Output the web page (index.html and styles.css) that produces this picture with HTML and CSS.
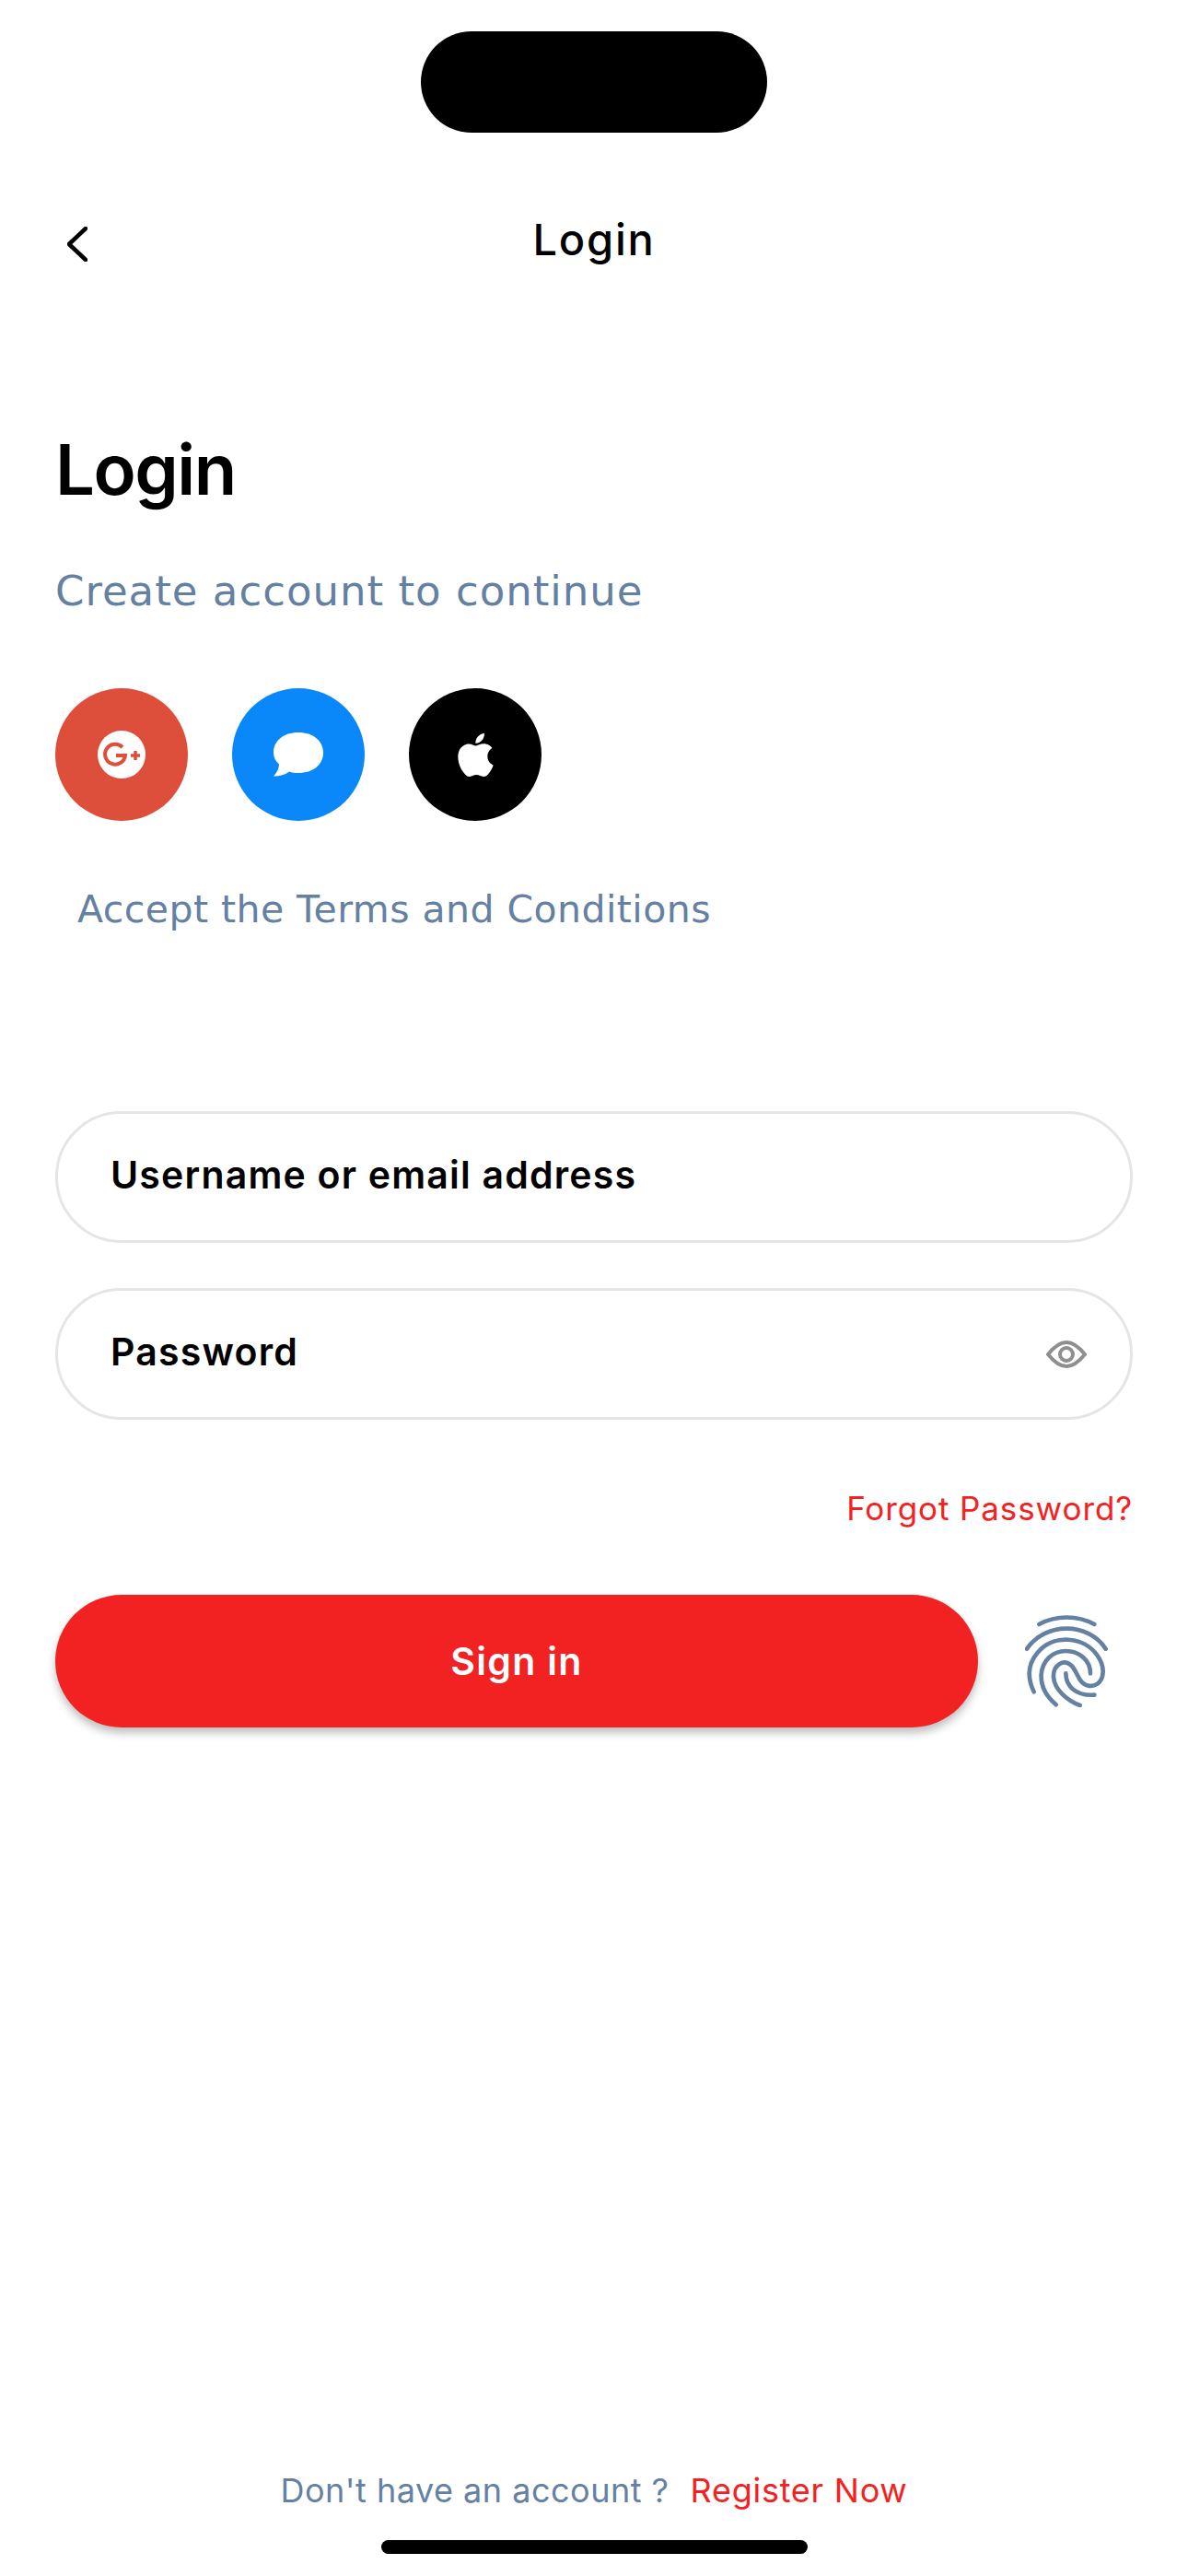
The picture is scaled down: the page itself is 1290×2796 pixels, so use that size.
FILE: index.html
```html
<!DOCTYPE html>
<html>

<head>
	<title>Login</title>
	<link rel="stylesheet" href="styles.css">
</head>

<body>
	<div class="notch"></div>

	<div class="header">
		<svg class="back-icon" viewBox="0 0 22 38" width="22" height="38">
			<path d="M20 2 L2 19 L20 36" fill="none" stroke="#000" stroke-width="4.500" stroke-linecap="round" stroke-linejoin="round" />
		</svg>
		<div class="header-title">Login</div>
	</div>

	<h1 class="title">Login</h1>
	<p class="subtitle">Create account to continue</p>

	<div class="social-row">
		<div class="social-btn google">
			<svg viewBox="0 0 52 52" width="52" height="52">
				<circle cx="26" cy="26" r="26" fill="#fff" />
				<path d="M27 18 A11 11 0 1 0 30 27 H20" fill="none" stroke="#de4f3b" stroke-width="4" />
				<path d="M41 22 V32 M36 27 H46" fill="none" stroke="#de4f3b" stroke-width="3.500" />
			</svg>
		</div>
		<div class="social-btn message">
			<svg viewBox="0 0 56 50" width="56" height="50">
				<path d="M28 1 C44 1 55 10 55 23 C55 36 44 45 28 45 C24 45 21 44.500 18 43.500 C14 47 8 48.500 1 48.500 C5 44 7 40 7 35.500 C3 32 1 28 1 23 C1 10 12 1 28 1 Z" fill="#fff" />
			</svg>
		</div>
		<div class="social-btn apple">
			<svg viewBox="0 0 24 24" width="47" height="47">
				<path d="M12.152 6.896c-.948 0-2.415-1.078-3.96-1.04-2.04.027-3.91 1.183-4.961 3.014-2.117 3.675-.546 9.103 1.519 12.09 1.013 1.454 2.208 3.09 3.792 3.039 1.52-.065 2.09-.987 3.935-.987 1.831 0 2.35.987 3.96.948 1.637-.026 2.676-1.48 3.676-2.948 1.156-1.688 1.636-3.325 1.662-3.415-.039-.013-3.182-1.221-3.22-4.857-.026-3.04 2.48-4.494 2.597-4.559-1.429-2.09-3.623-2.324-4.39-2.376-2-.156-3.675 1.09-4.61 1.09zM15.53 3.83c.843-1.012 1.4-2.427 1.245-3.83-1.207.052-2.662.805-3.532 1.818-.78.896-1.454 2.338-1.273 3.714 1.338.104 2.715-.688 3.559-1.701" fill="#fff" />
			</svg>
		</div>
	</div>

	<p class="terms">Accept the Terms and Conditions</p>

	<div class="field field-first">
		<span>Username or email address</span>
	</div>
	<div class="field field-second">
		<span>Password</span>
		<svg class="eye-icon" viewBox="0 0 44 30" width="44" height="30">
			<path d="M2 15 C10 5 16 2 22 2 C28 2 34 5 42 15 C34 25 28 28 22 28 C16 28 10 25 2 15 Z" fill="none" stroke="#8f8f8f" stroke-width="4" stroke-linejoin="round" />
			<circle cx="22" cy="15" r="7" fill="none" stroke="#8f8f8f" stroke-width="4" />
		</svg>
	</div>

	<a class="forgot">Forgot Password?</a>

	<div class="signin-row">
		<button class="signin-btn" type="button">Sign in</button>
		<svg class="finger-icon" viewBox="100 68 268 300" width="90" height="100">
			<g fill="none" stroke="#6480a3" stroke-width="14" stroke-linecap="round" stroke-linejoin="round">
				<path d="M145 98 C200 68 270 68 325 98" />
				<path d="M105 178 C165 90 305 90 362 178" />
				<path d="M128 318 C105 270 110 225 140 190 C190 130 290 135 335 200 C360 235 358 275 335 292 C315 305 290 298 278 278 C268 262 262 245 250 232 C225 210 190 230 192 270 C195 310 235 345 278 362" />
				<path d="M200 360 C165 330 150 300 152 262 C155 215 190 185 232 185 C275 185 312 215 312 258" />
				<path d="M232 258 C232 300 265 332 325 328" />
			</g>
		</svg>
	</div>

	<div class="footer">
		<span class="footer-text">Don't have an account ?</span>
		<a class="footer-link">Register Now</a>
	</div>
	<div class="home-bar"></div>
</body>

</html>
```
FILE: styles.css
```css
body {
	background-color: #fff;
	color: #000;
	font-family: Inter, "Liberation Sans", sans-serif;
	margin: 0;
	padding: 0 60px 24px;
	width: 1290px;
	height: 2796px;
	box-sizing: border-box;
	display: flex;
	flex-direction: column;
	overflow: hidden;
}

.notch {
	width: 376px;
	height: 110px;
	margin: 34px auto 0;
	background-color: #000;
	border-radius: 55px;
	flex-shrink: 0;
}

.header {
	display: grid;
	grid-template-columns: 1fr auto 1fr;
	align-items: center;
	height: 60px;
	margin-top: 86px;
}

.back-icon {
	display: block;
	margin: 3px 0 0 13px;
}

.header-title {
	grid-column: 2;
	font-size: 47px;
	line-height: 60px;
	font-weight: 500;
	letter-spacing: 1.8px;
	padding-bottom: 7px;
}

.title {
	margin: 174px 0 0;
	font-size: 76px;
	line-height: 90px;
	font-weight: 600;
	letter-spacing: -1.5px;
}

.subtitle {
	margin: 58px 0 0;
	font-family: "DejaVu Sans", sans-serif;
	font-size: 45px;
	line-height: 60px;
	letter-spacing: 1px;
	color: #6480a3;
}

.social-row {
	display: flex;
	gap: 48px;
	margin-top: 75px;
}

.social-btn {
	width: 144px;
	height: 144px;
	border-radius: 50%;
	display: flex;
	justify-content: center;
	align-items: center;
}

.google {
	background-color: #de4f3b;
}

.message {
	background-color: #0a88fa;
}

.apple {
	background-color: #000;
}

.terms {
	margin: 71px 0 0;
	padding-left: 24px;
	font-family: "DejaVu Sans", sans-serif;
	font-size: 41px;
	line-height: 50px;
	letter-spacing: 0.45px;
	color: #6480a3;
}

.field {
	height: 143px;
	box-sizing: border-box;
	border: 3px solid #e5e5e5;
	border-radius: 72px;
	padding: 0 47px 5px 57px;
	display: flex;
	justify-content: space-between;
	align-items: center;
	font-size: 41px;
	font-weight: 600;
	letter-spacing: 1.2px;
}

.eye-icon {
	margin-top: 5px;
}

.field-first {
	margin-top: 194px;
}

.field-second {
	margin-top: 49px;
}

.forgot {
	margin-top: 71px;
	align-self: flex-end;
	font-size: 35px;
	line-height: 50px;
	letter-spacing: 0.9px;
	color: #f32222;
}

.signin-row {
	display: flex;
	align-items: center;
	margin-top: 69px;
}

.signin-btn {
	width: 1002px;
	height: 144px;
	background-color: #f32222;
	color: #fff;
	border: none;
	border-radius: 72px;
	box-shadow: 0 6px 10px rgba(0, 0, 0, 0.25);
	font-family: inherit;
	font-size: 41px;
	font-weight: 600;
	letter-spacing: 1.3px;
}

.finger-icon {
	margin-left: 51px;
}

.footer {
	margin-top: auto;
	display: flex;
	justify-content: center;
	gap: 23px;
	font-size: 36px;
	line-height: 50px;
	color: #6480a3;
}

.footer-text {
	letter-spacing: 0.5px;
}

.footer-link {
	letter-spacing: 0.75px;
	color: #f32222;
}

.home-bar {
	width: 463px;
	height: 15px;
	margin: 29px auto 0;
	background-color: #000;
	border-radius: 8px;
	flex-shrink: 0;
}
```
